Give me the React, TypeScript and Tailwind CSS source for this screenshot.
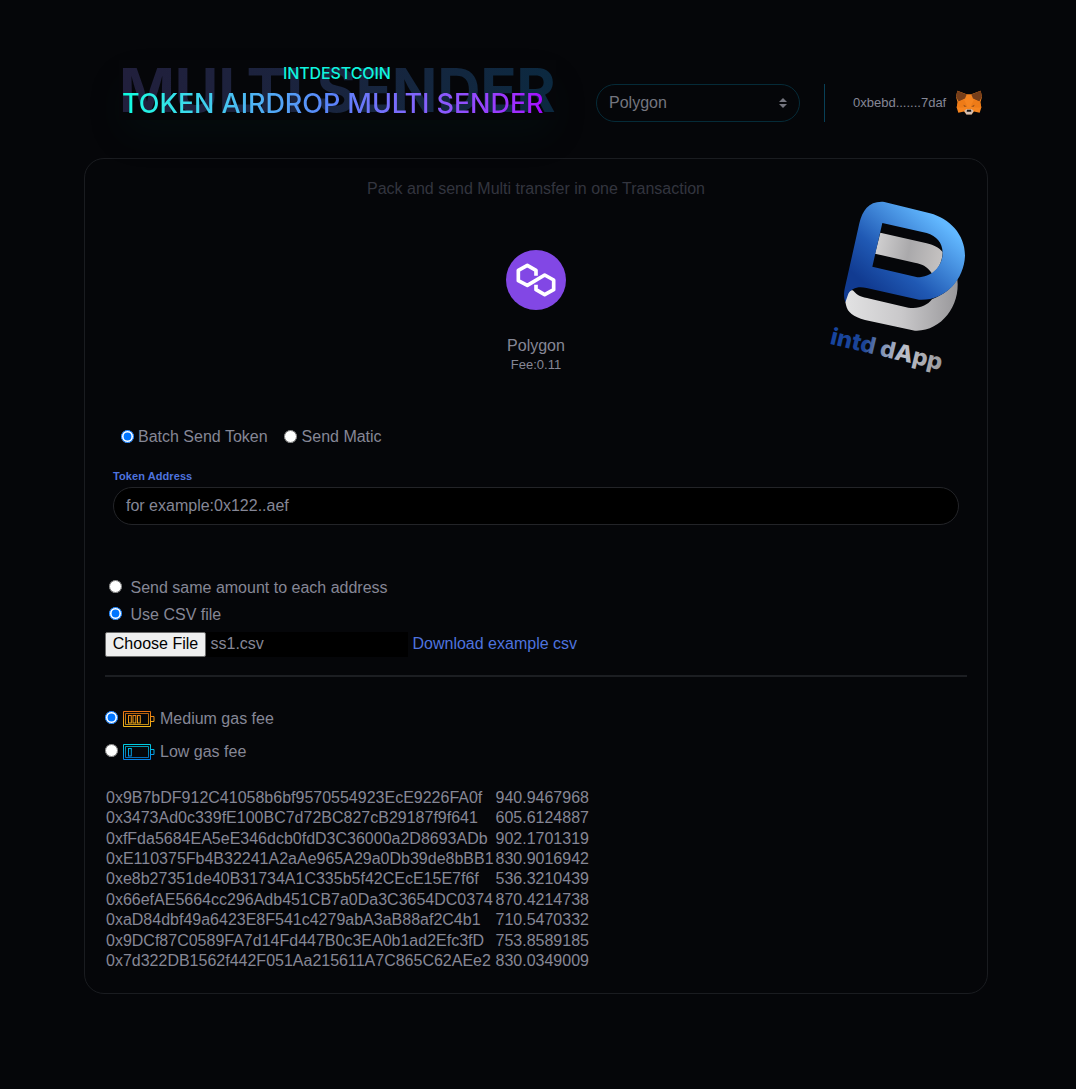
import React from "react";

const rows: [string, string][] = [
  ["0x9B7bDF912C41058b6bf9570554923EcE9226FA0f", "940.9467968"],
  ["0x3473Ad0c339fE100BC7d72BC827cB29187f9f641", "605.6124887"],
  ["0xfFda5684EA5eE346dcb0fdD3C36000a2D8693ADb", "902.1701319"],
  ["0xE110375Fb4B32241A2aAe965A29a0Db39de8bBB1", "830.9016942"],
  ["0xe8b27351de40B31734A1C335b5f42CEcE15E7f6f", "536.3210439"],
  ["0x66efAE5664cc296Adb451CB7a0Da3C3654DC0374", "870.4214738"],
  ["0xaD84dbf49a6423E8F541c4279abA3aB88af2C4b1", "710.5470332"],
  ["0x9DCf87C0589FA7d14Fd447B0c3EA0b1ad2Efc3fD", "753.8589185"],
  ["0x7d322DB1562f442F051Aa215611A7C865C62AEe2", "830.0349009"],
];

function Fox() {
  return (
    <svg width="26" height="25" viewBox="0 0 78 74" className="shrink-0">
      <path d="M4 2 32 12H46L74 2 78 20 73 38 76 52 71 68 54 64 47 72H31L24 64 7 68 2 52 5 38 0 20Z" fill="#f5841f" />
      <path d="M4 2 32 13 27 25 8 34 0 20ZM74 2 46 13 51 25 70 34 78 20Z" fill="#763e1a" />
      <path d="M5 36 24 28 33 46 22 52 2 52ZM73 36 54 28 45 46 56 52 76 52Z" fill="#ee7b17" />
      <path d="M22 44 33 49 25 50ZM56 44 45 49 53 50Z" fill="#8f4c18" />
      <path d="M25 62 31 57H47L53 62 47 73H31Z" fill="#d5bfb2" />
      <path d="M33 59H45L46 65H32Z" fill="#161616" />
    </svg>
  );
}

function DappLogo() {
  return (
    <svg width="165" height="195" viewBox="0 0 495 585">
      <defs>
        <linearGradient id="blue" x1="160" y1="290" x2="350" y2="70" gradientUnits="userSpaceOnUse">
          <stop offset="0" stopColor="#113b91" />
          <stop offset="0.35" stopColor="#2059b4" />
          <stop offset="1" stopColor="#62b8ff" />
        </linearGradient>
        <linearGradient id="silver" x1="90" y1="330" x2="430" y2="330" gradientUnits="userSpaceOnUse">
          <stop offset="0" stopColor="#e2e2e3" />
          <stop offset="0.5" stopColor="#c9c8ca" />
          <stop offset="1" stopColor="#98979a" />
        </linearGradient>
        <linearGradient id="band" x1="180" y1="160" x2="384" y2="200" gradientUnits="userSpaceOnUse">
          <stop offset="0" stopColor="#d2d1d2" />
          <stop offset="0.5" stopColor="#aaa9ab" />
          <stop offset="1" stopColor="#c6c3c2" />
        </linearGradient>
        <linearGradient id="word" x1="0" y1="0" x2="345" y2="0" gradientUnits="userSpaceOnUse">
          <stop offset="0" stopColor="#17459f" />
          <stop offset="0.3" stopColor="#1b4496" />
          <stop offset="0.42" stopColor="#7287b1" />
          <stop offset="0.65" stopColor="#bdc0c9" />
          <stop offset="1" stopColor="#99999c" />
        </linearGradient>
      </defs>
      <path d="M93 345C86 320 99 296 115 302C126 316 140 321 165 326L280 353C315 357 335 347 351 328C385 314 408 298 427 268C437 350 375 426 300 422L150 390C115 380 97 367 93 345Z" fill="url(#silver)" />
      <path d="M196 128 335 160C358 165 372 174 383 186C382 215 371 236 352 252C336 226 320 223 299 218L180 191Z" fill="url(#band)" />
      <path fillRule="evenodd" d="M91 337C86 322 86 310 90 292L133 100C143 60 163 32 208 36L345 70C403 85 450 133 450 197C447 270 390 333 312 329L155 294C128 287 109 296 100 311ZM202 99 172 230 307 262C350 262 383 229 383 188C382 158 365 138 335 129Z" fill="url(#blue)" />
      <text transform="translate(43 461) rotate(13.4)" fill="url(#word)" fontFamily="Inter, sans-serif" fontWeight="800" fontSize="69" textLength="343" lengthAdjust="spacingAndGlyphs">intd dApp</text>
    </svg>
  );
}

function PolygonLogo() {
  return (
    <svg width="60" height="60" viewBox="0 0 180 180">
      <circle cx="90" cy="90" r="90" fill="#8247e5" />
      <path d="M90 77V61L64 46 37 61V92L64 106 116 75 143 90V119L116 134 90 119V104" fill="none" stroke="#fff" strokeWidth="11" strokeLinejoin="round" />
    </svg>
  );
}

function Battery({ id, from, to, bars }: { id: string; from: string; to: string; bars: number }) {
  return (
    <svg width="32" height="18" viewBox="0 0 32 18" fill="none" stroke={`url(#${id})`}>
      <defs>
        <linearGradient id={id} x1="0" y1="0" x2="0" y2="18" gradientUnits="userSpaceOnUse">
          <stop stopColor={from} />
          <stop offset="1" stopColor={to} />
        </linearGradient>
      </defs>
      <path d="M.5 1.5H27.5V16.5H.5Z" />
      <path d="M2.5 3.5H25.5V14.5H2.5Z" strokeWidth="0.8" />
      <path d="M28 6.5h3v5h-3" />
      {Array.from({ length: bars }, (_, i) => (
        <rect key={i} x={5.5 + i * 4.5} y="5.5" width="2.8" height="7.5" />
      ))}
    </svg>
  );
}

function Radio({ name, on }: { name: string; on?: boolean }) {
  return <input type="radio" name={name} defaultChecked={on} className="mt-0 mb-0.5 block size-[13px] shrink-0" />;
}

export default function App() {
  return (
    <main className="h-[1089px] overflow-hidden bg-[#050609] px-[84px] pt-[60px] font-['Liberation_Sans',Arial,sans-serif] text-base leading-6 text-[#858796]">
      <header className="flex h-[98px] items-start">
        <div className="relative ml-[35px] w-[437px] font-['Inter',sans-serif] shadow-[0_18px_36px_-4px_rgba(0,45,38,0.16)]">
          <div className="h-[60px] bg-linear-to-r from-[#211f3c] to-[#0b2940] bg-clip-text text-[60px] leading-[61px] font-bold tracking-[-0.3px] whitespace-nowrap text-transparent">MULTI SENDER</div>
          <div className="absolute top-[3px] left-[164px] text-base leading-5 font-medium tracking-[-0.1px] text-[#0ff5df]">INTDESTCOIN</div>
          <div className="absolute top-[27px] left-[3px] bg-linear-to-r from-[#05ffe0] via-[#5a82fa] to-[#a500ff] bg-clip-text text-[27px] leading-[34px] font-medium tracking-[-0.06px] whitespace-nowrap text-transparent">TOKEN AIRDROP MULTI SENDER</div>
        </div>
        <div className="mt-6 ml-10 flex h-[38px] w-[204px] items-center justify-between rounded-full border border-[#052b38] pr-3 pl-3">
          <span className="text-[#74757f]">Polygon</span>
          <svg width="8" height="10" viewBox="0 0 8 10" fill="#74757f"><path d="M0 4 4 0 8 4ZM0 6H8L4 10Z" /></svg>
        </div>
        <div className="mt-6 ml-6 h-[38px] w-px bg-[#084057]" />
        <div className="mt-[30px] ml-7 flex h-[25px] items-center gap-[10px] text-[13px] whitespace-nowrap">
          <span>0xbebd.......7daf</span>
          <Fox />
        </div>
      </header>

      <section className="h-[836px] w-[904px] rounded-[20px] border border-[#1a1c20] px-5">
        <div className="grid h-[247px] grid-cols-[1fr_auto_1fr]">
          <div className="col-start-2 flex flex-col items-center pt-[18px]">
            <p className="text-[#33353f]">Pack and send Multi transfer in one Transaction</p>
            <div className="mt-[49px]"><PolygonLogo /></div>
            <p className="mt-6">Polygon</p>
            <p className="text-[13px] leading-[14px]">Fee:0.11</p>
          </div>
          <div className="mt-[31px] -mr-[13px] justify-self-end"><DappLogo /></div>
        </div>

        <div className="mt-[19px] ml-4 flex h-6 items-center">
          <Radio name="kind" on /><span className="ml-1">Batch Send Token</span>
          <span className="ml-4"><Radio name="kind" /></span><span className="ml-[5px]">Send Matic</span>
        </div>
        <div className="mt-5 ml-2 text-[11px] leading-[14px] font-bold tracking-[0.08px] text-[#4e73df]">Token Address</div>
        <div className="mt-1 ml-2 flex h-[38px] w-[846px] items-center rounded-full border border-[#232428] bg-black px-3">for example:0x122..aef</div>

        <div className="mt-[49px] ml-1 flex h-[27px] items-center gap-[8.5px]"><Radio name="mode" /><span>Send same amount to each address</span></div>
        <div className="ml-1 flex h-[27px] items-center gap-[8.5px]"><Radio name="mode" on /><span>Use CSV file</span></div>
        <div className="mt-1 flex h-[25px] items-center">
          <div className="flex h-full w-[303px] items-center bg-black">
            <button className="h-[25px] w-[101px] rounded-[2px] border border-[#6b6b6b] bg-[#efefef] pb-0.5 leading-5 text-black">Choose File</button>
            <span className="mb-0.5 ml-[4.5px]">ss1.csv</span>
          </div>
          <a className="mb-0.5 ml-[4.5px] text-[#4e73df]">Download example csv</a>
        </div>
        <div className="mt-[18px] h-0.5 w-[862px] bg-[#1c1e22]" />

        <div className="mt-7 flex h-[27px] items-center"><Radio name="gas" on /><span className="mr-[5px] ml-[5px]"><Battery id="warm" from="#e56a10" to="#f4bf1b" bars={3} /></span><span>Medium gas fee</span></div>
        <div className="mt-1.5 flex h-[27px] items-center"><Radio name="gas" /><span className="mr-[5px] ml-[5px]"><Battery id="cool" from="#00d5e0" to="#0878e8" bars={1} /></span><span>Low gas fee</span></div>

        <div className="mt-[20.8px] ml-px">
          {rows.map(([address, amount]) => (
            <div key={address} className="grid h-[20.4px] grid-cols-[389.5px_auto] items-center whitespace-nowrap">
              <span>{address}</span><span>{amount}</span>
            </div>
          ))}
        </div>
      </section>
    </main>
  );
}
